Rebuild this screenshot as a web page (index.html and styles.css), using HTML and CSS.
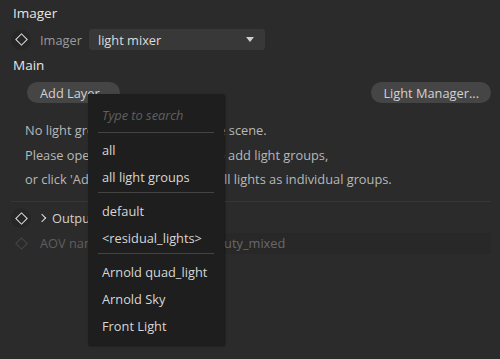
FILE: index.html
```html
<!DOCTYPE html>
<html lang="en">
<head>
  <meta charset="UTF-8">
  <title>Imager</title>
  <link rel="stylesheet" href="styles.css">
</head>
<body>
<div class="panel">
  <div class="heading">Imager</div>
  <div class="row">
    <span class="keyable"><span class="diamond"></span></span>
    <span class="label">Imager</span>
    <div class="combo">
      <span>light mixer</span>
      <span class="caret"></span>
    </div>
  </div>
  <div class="heading main">Main</div>
  <div class="buttons">
    <button class="pill add">Add Layer</button>
    <button class="pill">Light Manager...</button>
  </div>
  <div class="info">
    <p>No light groups were found in the scene.</p>
    <p>Please open the Light Manager to add light groups,</p>
    <p>or click 'Add Layer' to easily add all lights as individual groups.</p>
  </div>
  <div class="rule"></div>
  <div class="row">
    <span class="keyable"><span class="diamond"></span></span>
    <span class="chevron"></span>
    <span class="label bright">Outputs</span>
  </div>
  <div class="row dim">
    <span class="keyable"><span class="diamond"></span></span>
    <span class="label">AOV name</span>
    <div class="field">lightgroup_beauty_mixed</div>
  </div>
</div>

<div class="popup">
  <div class="search">Type to search</div>
  <div class="sep"></div>
  <div class="item">all</div>
  <div class="item">all light groups</div>
  <div class="sep"></div>
  <div class="item">default</div>
  <div class="item">&lt;residual_lights&gt;</div>
  <div class="sep"></div>
  <div class="item">Arnold quad_light</div>
  <div class="item">Arnold Sky</div>
  <div class="item">Front Light</div>
</div>
</body>
</html>
```

FILE: styles.css
```css
html, body {
  margin: 0;
  height: 100%;
  background-color: #2b2b2b;
}

body {
  font-family: "Open Sans", "Noto Sans", sans-serif;
  font-size: 12.8px;
  color: #c8c8c8;
  position: relative;
  overflow: hidden;
}

.panel {
  padding: 3px 9px 0 13px;
}

.heading {
  height: 20px;
  line-height: 20px;
  font-size: 13.5px;
  color: #e6e6e6;
}

.heading.main {
  margin-top: 5px;
}

.row {
  display: flex;
  align-items: center;
  height: 21px;
  margin-top: 6px;
}

.keyable {
  width: 20px;
  height: 20px;
  margin-left: -2px;
  border-radius: 50%;
  background-color: #262626;
  display: flex;
  align-items: center;
  justify-content: center;
}

.diamond {
  width: 7px;
  height: 7px;
  border: 1.5px solid #e2e2e2;
  transform: rotate(45deg);
}

.label {
  margin-left: 9px;
  color: #9a9a9a;
}

.label.bright {
  margin-left: 7px;
  color: #cfcfcf;
}

.combo {
  margin-left: 7px;
  width: 158px;
  height: 21px;
  padding: 0 9px;
  border-radius: 3px;
  background-color: #383838;
  color: #dcdcdc;
  display: flex;
  align-items: center;
  justify-content: space-between;
}

.caret {
  width: 0;
  height: 0;
  border-left: 4.5px solid transparent;
  border-right: 4.5px solid transparent;
  border-top: 5px solid #cfcfcf;
  margin-right: 2px;
}

.buttons {
  display: flex;
  justify-content: space-between;
  margin: 7px 0 0 14px;
}

.pill {
  height: 21px;
  padding: 0 12px;
  border: none;
  border-radius: 11px;
  background-color: #454545;
  color: #d2d2d2;
  font-family: inherit;
  font-size: 12.8px;
  text-align: left;
}

.pill.add {
  width: 93px;
  padding-left: 13px;
}

.info {
  margin: 15px 0 0 12px;
  color: #b8b8b8;
}

.info p {
  margin: 0;
  height: 24.5px;
  line-height: 24px;
}

.rule {
  height: 1px;
  margin: 9px 0 0 -2px;
  background-color: #363636;
}

.chevron {
  width: 5px;
  height: 5px;
  margin-left: 8px;
  border-top: 1.5px solid #e0e0e0;
  border-right: 1.5px solid #e0e0e0;
  transform: rotate(45deg);
}

.row.dim {
  margin-top: 4px;
}

.row.dim .keyable {
  background-color: transparent;
}

.row.dim .diamond {
  border-color: #474747;
}

.row.dim .label {
  color: #5f5f5f;
}

.field {
  flex: 1;
  height: 21px;
  line-height: 21px;
  margin-left: 28px;
  padding-left: 4px;
  border-radius: 3px;
  background-color: #282828;
  color: #686868;
}

.popup {
  position: absolute;
  left: 88px;
  top: 94px;
  width: 136px;
  height: 251px;
  padding: 0 9px;
  box-sizing: border-box;
  background-color: #1e1e1e;
  box-shadow: 1px 1px 2px rgba(0, 0, 0, 0.5);
}

.search {
  height: 38px;
  line-height: 42px;
  padding-left: 5px;
  font-style: italic;
  color: #606060;
}

.sep {
  height: 1px;
  margin: 0 1px;
  background-color: #444;
}

.popup .search + .sep {
  margin-bottom: 4px;
}

.item {
  height: 27px;
  line-height: 27px;
  padding-left: 5px;
  color: #d6d6d6;
}

.item + .sep {
  margin: 1px 1px 5px;
}
```
